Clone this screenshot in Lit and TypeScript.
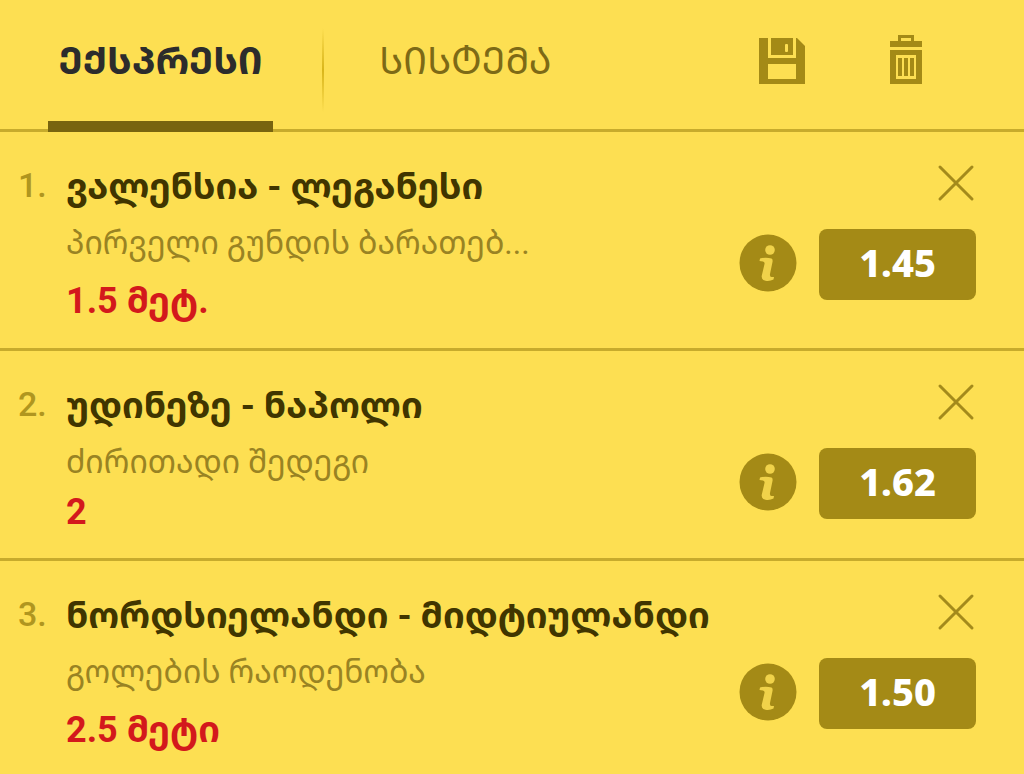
import { LitElement, html, css, svg } from "lit";
import { customElement, property } from "lit/decorators.js";

interface Bet {
  match: string;
  market: string;
  pick: string;
  odds: string;
}

const BETS: Bet[] = [
  { match: "ვალენსია - ლეგანესი", market: "პირველი გუნდის ბარათებ...", pick: "1.5 მეტ.", odds: "1.45" },
  { match: "უდინეზე - ნაპოლი", market: "ძირითადი შედეგი", pick: "2", odds: "1.62" },
  { match: "ნორდსიელანდი - მიდტიულანდი", market: "გოლების რაოდენობა", pick: "2.5 მეტი", odds: "1.50" },
];

const saveIcon = svg`
  <path fill-rule="evenodd" d="M0 0H38L46 8V46H0ZM9 26V41H37V26ZM9 0V20H37V0H34V17H12V0Z"/>
  <rect class="cut" x="26" y="6" width="3" height="8" rx="1"/>`;

const trashIcon = svg`
  <path fill-rule="evenodd" d="M0 6H8V0H24V6H32V12H0ZM11 3V6H21V3Z"/>
  <path fill-rule="evenodd" d="M0 15H32V49H0ZM6 20V44H26V20Z"/>
  <path d="M8 23h4v18H8zM14 23h4v18h-4zM20 23h4v18h-4z"/>`;

@customElement("bet-row")
export class BetRow extends LitElement {
  @property({ attribute: false }) bet!: Bet;
  @property({ type: Number }) index = 1;

  static styles = css`
    :host {
      display: block;
      border-bottom: 3px solid #c7ab2c;
    }
    .row {
      display: grid;
      grid-template-columns: 48px minmax(0, 1fr) auto;
      padding: 27px 48px 17px 18px;
    }
    .index {
      font-size: 34px;
      line-height: 52px;
      font-weight: 500;
      color: #b0961f;
    }
    .info {
      display: flex;
      flex-direction: column;
    }
    .match {
      margin: 0;
      font-size: 36px;
      line-height: 56px;
      font-weight: 700;
      color: #403500;
      white-space: nowrap;
    }
    .market {
      margin: 0;
      font-size: 32px;
      line-height: 56px;
      color: #998323;
      white-space: nowrap;
    }
    .pick {
      margin: 0;
      font-size: 36px;
      line-height: 60px;
      font-weight: 700;
      color: #d3191c;
    }
    .pick.short {
      line-height: 44px;
      padding-bottom: 7px;
    }
    .side {
      display: flex;
      flex-direction: column;
      align-items: flex-end;
      gap: 26px;
      padding-top: 5px;
    }
    .odds {
      display: flex;
      align-items: center;
      gap: 22px;
    }
    button {
      display: flex;
      align-items: center;
      justify-content: center;
      padding: 0;
      border: 0;
      background: none;
      cursor: pointer;
      font-family: inherit;
    }
    .value {
      box-sizing: border-box;
      width: 157px;
      height: 71px;
      padding-bottom: 5px;
      border-radius: 8px;
      background: #a48a16;
      color: #fff;
      font-family: "Noto Sans", sans-serif;
      font-size: 38px;
      line-height: 48px;
      font-weight: 800;
    }
    .info-button {
      padding-bottom: 4px;
    }
    .close path {
      stroke: #a48a1b;
      stroke-width: 3;
      stroke-linecap: round;
      fill: none;
    }
    .disc {
      fill: #a48a16;
    }
    .glyph {
      fill: #f0d24a;
    }
    svg {
      display: block;
    }
  `;

  render() {
    const { match, market, pick, odds } = this.bet;
    return html`
      <article class="row">
        <span class="index">${this.index}.</span>
        <div class="info">
          <h2 class="match">${match}</h2>
          <p class="market">${market}</p>
          <p class="pick ${pick.length < 2 ? "short" : ""}">${pick}</p>
        </div>
        <div class="side">
          <button class="close" aria-label="წაშლა">
            <svg width="39" height="39" viewBox="0 0 39 39"><path d="M3 3L35 35M35 3L3 35" /></svg>
          </button>
          <div class="odds">
            <button class="info-button" aria-label="ინფორმაცია">
              <svg width="58" height="58" viewBox="0 0 58 58">
                <circle class="disc" cx="29" cy="29" r="28.5" />
                <circle class="glyph" cx="31" cy="16" r="4.8" />
                <path class="glyph" d="M21 24.500Q27 23 32.500 24.500Q34 25 33.500 28L31 40Q30.600 43 32.500 43L35 43L34.500 45.500Q31 47.500 26.500 46.800Q22 46 22.800 41.500L25.500 30Q26 28 24 27.500L20.500 27Z" />
              </svg>
            </button>
            <button class="value">${odds}</button>
          </div>
        </div>
      </article>
    `;
  }
}

@customElement("app-root")
export class AppRoot extends LitElement {
  static styles = css`
    :host {
      display: block;
      height: 100vh;
      overflow: hidden;
      background: #fddf52;
      font-family: Roboto, "Noto Sans Georgian", "Noto Sans", sans-serif;
    }
    .bar {
      display: flex;
      align-items: stretch;
      height: 129px;
      border-bottom: 3px solid #c7ab2c;
      padding: 0 102px 0 48px;
    }
    .tabs {
      display: flex;
      flex: 1;
    }
    button {
      padding: 0;
      border: 0;
      background: none;
      cursor: pointer;
      font-family: inherit;
    }
    .tab {
      display: flex;
      flex-direction: column;
      align-items: center;
      box-sizing: border-box;
      width: 225px;
      height: 132px;
      padding-top: 36px;
      border-bottom: 11px solid transparent;
      font-size: 38px;
      line-height: 50px;
      color: #7d6a16;
      white-space: nowrap;
    }
    .tab.active {
      border-bottom-color: #78640f;
      font-weight: 700;
      color: #2c2c2c;
    }
    .divider {
      width: 2px;
      height: 84px;
      margin: 28px 29px 0 49px;
      background: linear-gradient(#fddf52, #d9b51b 50%, #fddf52);
    }
    .tools {
      display: flex;
      align-items: flex-start;
      gap: 85px;
      padding-top: 35px;
    }
    .tools svg {
      display: block;
      fill: #a48a16;
    }
    .tools .save {
      padding-top: 3px;
    }
    .cut {
      fill: #fddf52;
    }
  `;

  render() {
    return html`
      <header class="bar">
        <nav class="tabs">
          <button class="tab active">ᲔᲥᲡᲞᲠᲔᲡᲘ</button>
          <span class="divider"></span>
          <button class="tab">ᲡᲘᲡᲢᲔᲛᲐ</button>
        </nav>
        <div class="tools">
          <button class="save" aria-label="შენახვა">
            <svg width="46" height="46" viewBox="0 0 46 46">${saveIcon}</svg>
          </button>
          <button aria-label="წაშლა">
            <svg width="32" height="49" viewBox="0 0 32 49">${trashIcon}</svg>
          </button>
        </div>
      </header>
      <main>
        ${BETS.map((bet, i) => html`<bet-row .bet=${bet} .index=${i + 1}></bet-row>`)}
      </main>
    `;
  }
}
